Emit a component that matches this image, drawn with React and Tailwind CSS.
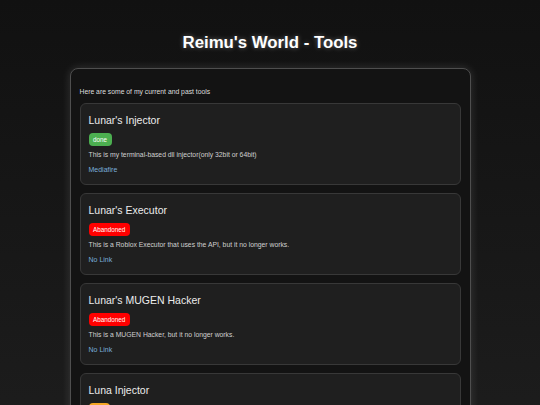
const tools = [
  {
    name: "Lunar's Injector",
    status: 'done',
    badge: 'bg-[#4caf50]',
    desc: 'This is my terminal-based dll injector(only 32bit or 64bit)',
    link: 'Mediafire',
  },
  {
    name: "Lunar's Executor",
    status: 'Abandoned',
    badge: 'bg-[#ff0000]',
    desc: 'This is a Roblox Executor that uses the API, but it no longer works.',
    link: 'No Link',
  },
  {
    name: "Lunar's MUGEN Hacker",
    status: 'Abandoned',
    badge: 'bg-[#ff0000]',
    desc: 'This is a MUGEN Hacker, but it no longer works.',
    link: 'No Link',
  },
  {
    name: 'Luna Injector',
    status: 'beta',
    badge: 'bg-[#f5a623]',
    desc: 'This is a dll injector with a GUI.',
    link: 'No Link',
  },
];

function ToolCard({ tool }) {
  return (
    <div className="flex flex-col items-start rounded-[6px] border border-[#383838] bg-[#1f1f1f] px-[8px] pt-[10px] pb-[10px]">
      <h2 className="text-[10.5px] leading-[12px] text-[#ececec]">{tool.name}</h2>
      <span className={`mt-[7px] flex h-[13px] items-center rounded-[4px] px-[4.5px] text-[6.3px] leading-[8px] text-white ${tool.badge}`}>
        {tool.status}
      </span>
      <p className="mt-[5px] text-[6.8px] leading-[8px] text-[#d0d0d0]">{tool.desc}</p>
      <a className="mt-[7px] block text-[7px] leading-[8px] text-[#7aaedb]">{tool.link}</a>
    </div>
  );
}

export default function App() {
  return (
    <div className="min-h-screen bg-gradient-to-b from-[#111111] to-[#1f1f1f] pb-10 font-['Liberation_Sans',Arial,sans-serif]">
      <h1 className="pt-[33px] text-center text-[16.8px] font-bold leading-[20px] text-white [text-shadow:0_0_5px_rgba(255,255,255,0.35)]">
        Reimu's World - Tools
      </h1>
      <div className="mx-auto mt-[15px] w-[401px] rounded-[8px] border border-[#4e4e4e] bg-[#131313] px-[9px] pt-[18px] pb-[10px] shadow-[0_0_10px_rgba(255,255,255,0.14)]">
        <p className="mb-[7px] text-[6.8px] leading-[9px] text-[#dddddd]">Here are some of my current and past tools</p>
        <div className="flex flex-col gap-[8px]">
          {tools.map((tool) => (
            <ToolCard key={tool.name} tool={tool} />
          ))}
        </div>
      </div>
    </div>
  );
}
